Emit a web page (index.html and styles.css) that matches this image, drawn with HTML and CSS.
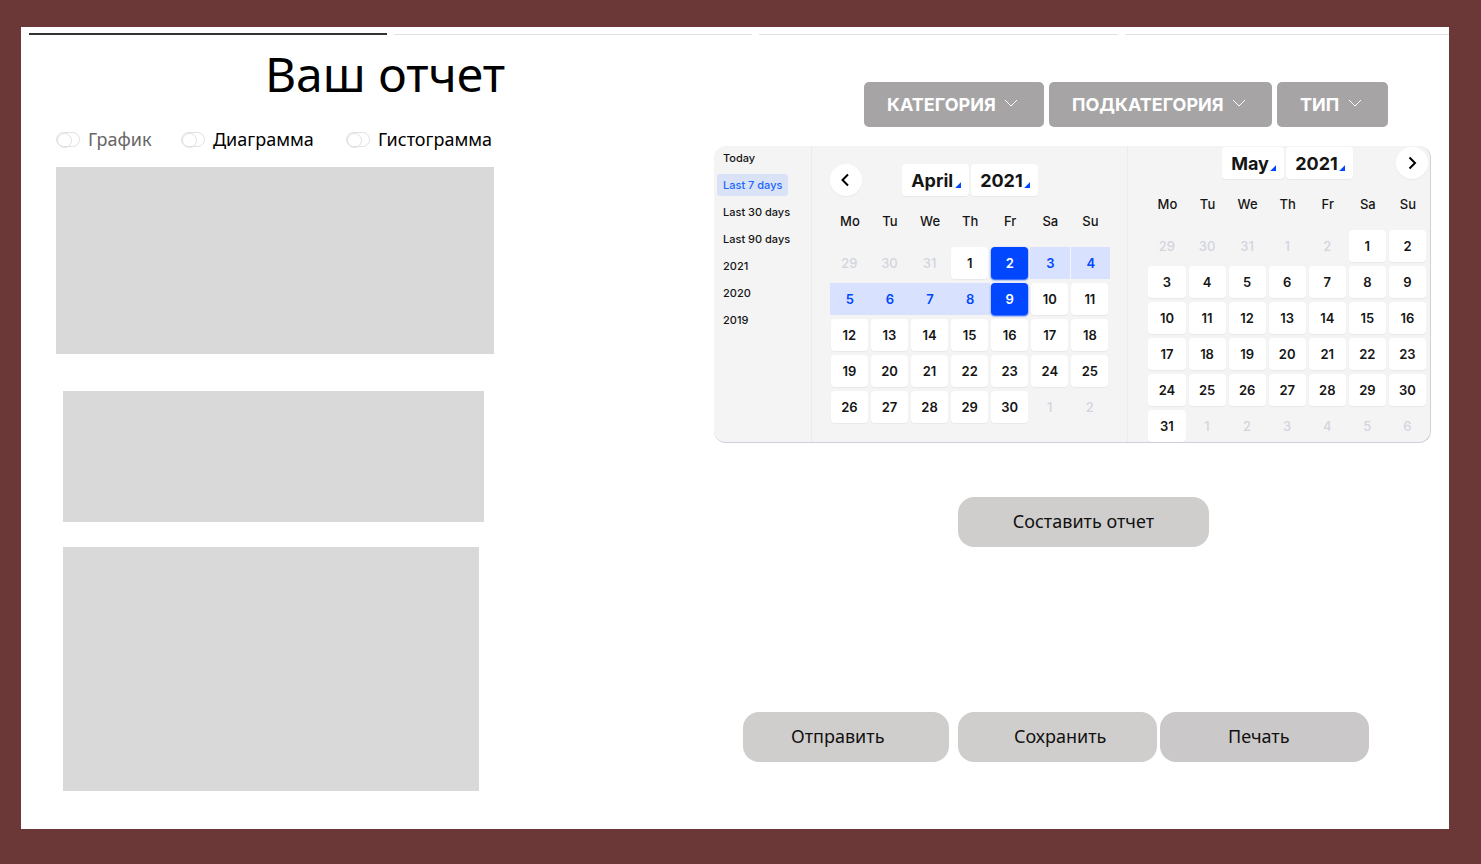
FILE: index.html
```html
<!DOCTYPE html>
<html lang="ru">
<head>
<meta charset="utf-8">
<meta name="viewport" content="width=device-width, initial-scale=1">
<title>Ваш отчет</title>
<link rel="stylesheet" href="styles.css">
</head>
<body class="page">
<div class="panel">
  <div class="steps" aria-hidden="true">
    <span class="step step-active"></span><span class="step"></span><span class="step"></span><span class="step"></span>
  </div>
  <main class="columns">
    <section class="report">
      <h1 class="title">Ваш отчет</h1>
      <div class="toggles">
        <label class="toggle toggle-muted"><input class="switch" type="checkbox">График</label>
        <label class="toggle"><input class="switch" type="checkbox">Диаграмма</label>
        <label class="toggle"><input class="switch" type="checkbox">Гистограмма</label>
      </div>
      <div class="chart chart-first"></div>
      <div class="chart chart-second"></div>
      <div class="chart chart-third"></div>
    </section>
    <section class="controls">
      <div class="filters">
        <div class="filter"><select class="filter-select" aria-label="Категория"><option>КАТЕГОРИЯ</option></select><svg class="chevron" viewBox="0 0 14 8"><path d="M1 1l6 6 6-6"/></svg></div>
        <div class="filter"><select class="filter-select" aria-label="Подкатегория"><option>ПОДКАТЕГОРИЯ</option></select><svg class="chevron" viewBox="0 0 14 8"><path d="M1 1l6 6 6-6"/></svg></div>
        <div class="filter"><select class="filter-select" aria-label="Тип"><option>ТИП</option></select><svg class="chevron" viewBox="0 0 14 8"><path d="M1 1l6 6 6-6"/></svg></div>
      </div>
      <div class="calendar" lang="en">
        <div class="presets">
          <button class="preset">Today</button>
          <button class="preset preset-active">Last 7 days</button>
          <button class="preset">Last 30 days</button>
          <button class="preset">Last 90 days</button>
          <button class="preset">2021</button>
          <button class="preset">2020</button>
          <button class="preset">2019</button>
        </div>
        <div class="month month-april">
          <div class="month-head">
            <button class="arrow" aria-label="Previous month"><svg class="arrow-icon" viewBox="0 0 16 16"><path d="M10 2.500L4.500 8l5.500 5.500"/></svg></button>
            <div class="pickers">
              <div class="picker"><select class="picker-select" aria-label="Month"><option>April</option></select></div>
              <div class="picker"><select class="picker-select" aria-label="Year"><option>2021</option></select></div>
            </div>
          </div>
          <table class="days">
            <thead><tr><th>Mo</th><th>Tu</th><th>We</th><th>Th</th><th>Fr</th><th>Sa</th><th>Su</th></tr></thead>
            <tbody>
              <tr><td><button class="day out">29</button></td><td><button class="day out">30</button></td><td><button class="day out">31</button></td><td><button class="day">1</button></td><td><button class="day picked">2</button></td><td><button class="day range">3</button></td><td><button class="day range range-break">4</button></td></tr>
              <tr><td><button class="day range">5</button></td><td><button class="day range">6</button></td><td><button class="day range">7</button></td><td><button class="day range">8</button></td><td><button class="day picked">9</button></td><td><button class="day">10</button></td><td><button class="day">11</button></td></tr>
              <tr><td><button class="day">12</button></td><td><button class="day">13</button></td><td><button class="day">14</button></td><td><button class="day">15</button></td><td><button class="day">16</button></td><td><button class="day">17</button></td><td><button class="day">18</button></td></tr>
              <tr><td><button class="day">19</button></td><td><button class="day">20</button></td><td><button class="day">21</button></td><td><button class="day">22</button></td><td><button class="day">23</button></td><td><button class="day">24</button></td><td><button class="day">25</button></td></tr>
              <tr><td><button class="day">26</button></td><td><button class="day">27</button></td><td><button class="day">28</button></td><td><button class="day">29</button></td><td><button class="day">30</button></td><td><button class="day out">1</button></td><td><button class="day out">2</button></td></tr>
            </tbody>
          </table>
        </div>
        <div class="month month-may">
          <div class="month-head">
            <div class="pickers">
              <div class="picker"><select class="picker-select" aria-label="Month"><option>May</option></select></div>
              <div class="picker"><select class="picker-select" aria-label="Year"><option>2021</option></select></div>
            </div>
            <button class="arrow arrow-next" aria-label="Next month"><svg class="arrow-icon" viewBox="0 0 16 16"><path d="M5.500 2.500L11 8l-5.500 5.500"/></svg></button>
          </div>
          <table class="days">
            <thead><tr><th>Mo</th><th>Tu</th><th>We</th><th>Th</th><th>Fr</th><th>Sa</th><th>Su</th></tr></thead>
            <tbody>
              <tr><td><button class="day out">29</button></td><td><button class="day out">30</button></td><td><button class="day out">31</button></td><td><button class="day out">1</button></td><td><button class="day out">2</button></td><td><button class="day">1</button></td><td><button class="day">2</button></td></tr>
              <tr><td><button class="day">3</button></td><td><button class="day">4</button></td><td><button class="day">5</button></td><td><button class="day">6</button></td><td><button class="day">7</button></td><td><button class="day">8</button></td><td><button class="day">9</button></td></tr>
              <tr><td><button class="day">10</button></td><td><button class="day">11</button></td><td><button class="day">12</button></td><td><button class="day">13</button></td><td><button class="day">14</button></td><td><button class="day">15</button></td><td><button class="day">16</button></td></tr>
              <tr><td><button class="day">17</button></td><td><button class="day">18</button></td><td><button class="day">19</button></td><td><button class="day">20</button></td><td><button class="day">21</button></td><td><button class="day">22</button></td><td><button class="day">23</button></td></tr>
              <tr><td><button class="day">24</button></td><td><button class="day">25</button></td><td><button class="day">26</button></td><td><button class="day">27</button></td><td><button class="day">28</button></td><td><button class="day">29</button></td><td><button class="day">30</button></td></tr>
              <tr><td><button class="day">31</button></td><td><button class="day out">1</button></td><td><button class="day out">2</button></td><td><button class="day out">3</button></td><td><button class="day out">4</button></td><td><button class="day out">5</button></td><td><button class="day out">6</button></td></tr>
            </tbody>
          </table>
        </div>
      </div>
      <button class="action action-create">Составить отчет</button>
      <div class="actions">
        <button class="action action-send">Отправить</button>
        <button class="action action-save">Сохранить</button>
        <button class="action action-print">Печать</button>
      </div>
    </section>
  </main>
</div>
</body>
</html>
```

FILE: styles.css
```css
* { box-sizing: border-box; }

.page {
  margin: 0;
  min-height: 100vh;
  padding: 27px 32px 35px 21px;
  display: flex;
  background: #6b3737;
  color: #000;
  font-family: "Noto Sans", "Open Sans", sans-serif;
}
button, select { font-family: inherit; color: inherit; border: 0; margin: 0; cursor: pointer; }

.panel { flex: 1; min-width: 0; background: #fff; }

/* progress line */
.steps {
  display: grid;
  grid-template-columns: 358fr 358fr 359fr 324fr;
  gap: 7px;
  height: 8px;
  padding-left: 8px;
  align-items: end;
}
.step { height: 1px; background: #e2e2e2; }
.step-active { height: 2px; background: #333; }

.columns {
  display: grid;
  grid-template-columns: 658fr 717fr;
  padding: 0 18px 38px 35px;
}

/* report column */
.report { min-width: 0; }
.title {
  margin: 0;
  padding-top: 7px;
  text-align: center;
  font-size: 48px;
  line-height: 64px;
  font-weight: 400;
}
.toggles {
  display: grid;
  grid-template-columns: 125px 165px auto;
  margin-top: 20px;
  height: 41px;
  align-items: start;
}
.toggle { display: flex; align-items: center; gap: 8px; font-size: 18px; line-height: 26px; white-space: nowrap; }
.toggle-muted { color: #666; }
.switch {
  appearance: none;
  flex: none;
  width: 24px;
  height: 15px;
  margin: 0;
  border: 1px solid #e0e0e0;
  border-radius: 8px;
  background: #fff;
}
.switch::before {
  content: "";
  display: block;
  width: 13px;
  height: 13px;
  border: 1px solid #e0e0e0;
  border-radius: 50%;
}
.switch:checked::before { margin-left: auto; }

.chart { background: #d9d9d9; }
.chart-first { width: 66.6%; height: 187px; }
.chart-second { width: 64%; height: 131px; margin: 37px 0 25px 7px; }
.chart-third { width: 63.2%; height: 244px; margin-left: 7px; }

/* filters */
.controls { min-width: 0; font-size: 18px; }
.filters { display: flex; justify-content: flex-end; gap: 5px; padding: 47px 43px 19px 0; }
.filter { position: relative; }
.filter-select {
  appearance: none;
  display: block;
  height: 45px;
  padding: 0 48px 0 23px;
  border-radius: 5px;
  background: #a6a4a5;
  color: #fff;
  font-family: Inter, sans-serif;
  font-size: 18px;
  font-weight: 700;
}
.chevron {
  position: absolute;
  right: 26px;
  top: 17px;
  width: 14px;
  height: 8px;
  fill: none;
  stroke: #fff;
  pointer-events: none;
}

/* calendar */
.calendar {
  display: grid;
  grid-template-columns: 97fr 317fr 303fr;
  overflow: hidden;
  border-right: 1px solid #cfd0dc;
  border-bottom: 1px solid #cfd0dc;
  border-radius: 12px;
  background: #f4f4f4;
  color: #151515;
  font-family: Inter, sans-serif;
}
.presets { display: flex; flex-direction: column; align-items: flex-start; gap: 5px; padding: 1px 0 0 3px; }
.preset { height: 22px; padding: 0 6px; border-radius: 3px; background: none; font-size: 11px; font-weight: 500; white-space: nowrap; }
.preset-active { background: #dae2f8; color: #1a66ff; }

.month { border-left: 1px solid #ececee; }
.month-april { padding: 18px 17px 0 18px; }
.month-may { padding: 1px 2px 0 19px; }
.month-head { display: grid; grid-template-columns: 1fr auto 1fr; height: 33px; }
.pickers { grid-column: 2; display: flex; gap: 2px; }
.picker { position: relative; }
.picker::after {
  content: "";
  position: absolute;
  right: 8px;
  bottom: 9px;
  width: 6px;
  height: 6px;
  background: #0047ff;
  clip-path: polygon(100% 0, 100% 100%, 0 100%);
  pointer-events: none;
}
.picker-select {
  appearance: none;
  display: block;
  height: 32px;
  padding: 0 15px 0 9px;
  border-radius: 4px;
  background: #fff;
  box-shadow: 0 1px 1px #e8e8ea;
  font-size: 18px;
  font-weight: 700;
}
.arrow {
  display: grid;
  place-items: center;
  width: 32px;
  height: 32px;
  padding: 0;
  border-radius: 50%;
  background: #fff;
  box-shadow: 0 1px 1px #e8e8ea;
}
.arrow-next { grid-column: 3; justify-self: end; }
.arrow-icon { width: 16px; height: 16px; fill: none; stroke: #000; stroke-width: 2; }

.days { width: 100%; table-layout: fixed; border-collapse: collapse; font-size: 13px; }
.days th { height: 48px; padding: 0; font-weight: 500; }
.days td { height: 36px; padding: 0 2px 0 1px; }
.month-may .days { margin-bottom: -2px; }
.day {
  display: block;
  width: 100%;
  height: 32px;
  padding: 0;
  border-radius: 4px;
  background: #fff;
  box-shadow: 0 1px 1px #e8e8ea;
  font-size: 13px;
  font-weight: 600;
}
.out { background: none; box-shadow: none; color: #d3d4de; font-weight: 500; }
.days td:has(.range) { padding: 0; }
.range { border-radius: 0; background: #d8e2ff; box-shadow: none; color: #0047ff; }
.range-break { border-left: 1px solid #f4f4f4; }
.picked { background: #0047ff; box-shadow: 0 1px 2px #0047ff; color: #fff; }

/* actions */
.action {
  height: 50px;
  border-radius: 16px;
  background: #d0cecd;
  color: #111;
  font-size: 18px;
  line-height: 24px;
  text-align: left;
  white-space: nowrap;
}
.action-create { display: block; width: 35%; margin: 54px 0 165px 34%; padding: 0 0 2px 55px; }
.actions { display: grid; grid-template-columns: 212fr 199fr 209fr; gap: 3px; padding: 0 62px 0 29px; }
.action-send { margin-right: 6px; padding: 0 0 2px 48px; }
.action-save { padding: 0 0 2px 56px; }
.action-print { padding: 0 0 2px 68px; background: #cbc8c9; }
```
